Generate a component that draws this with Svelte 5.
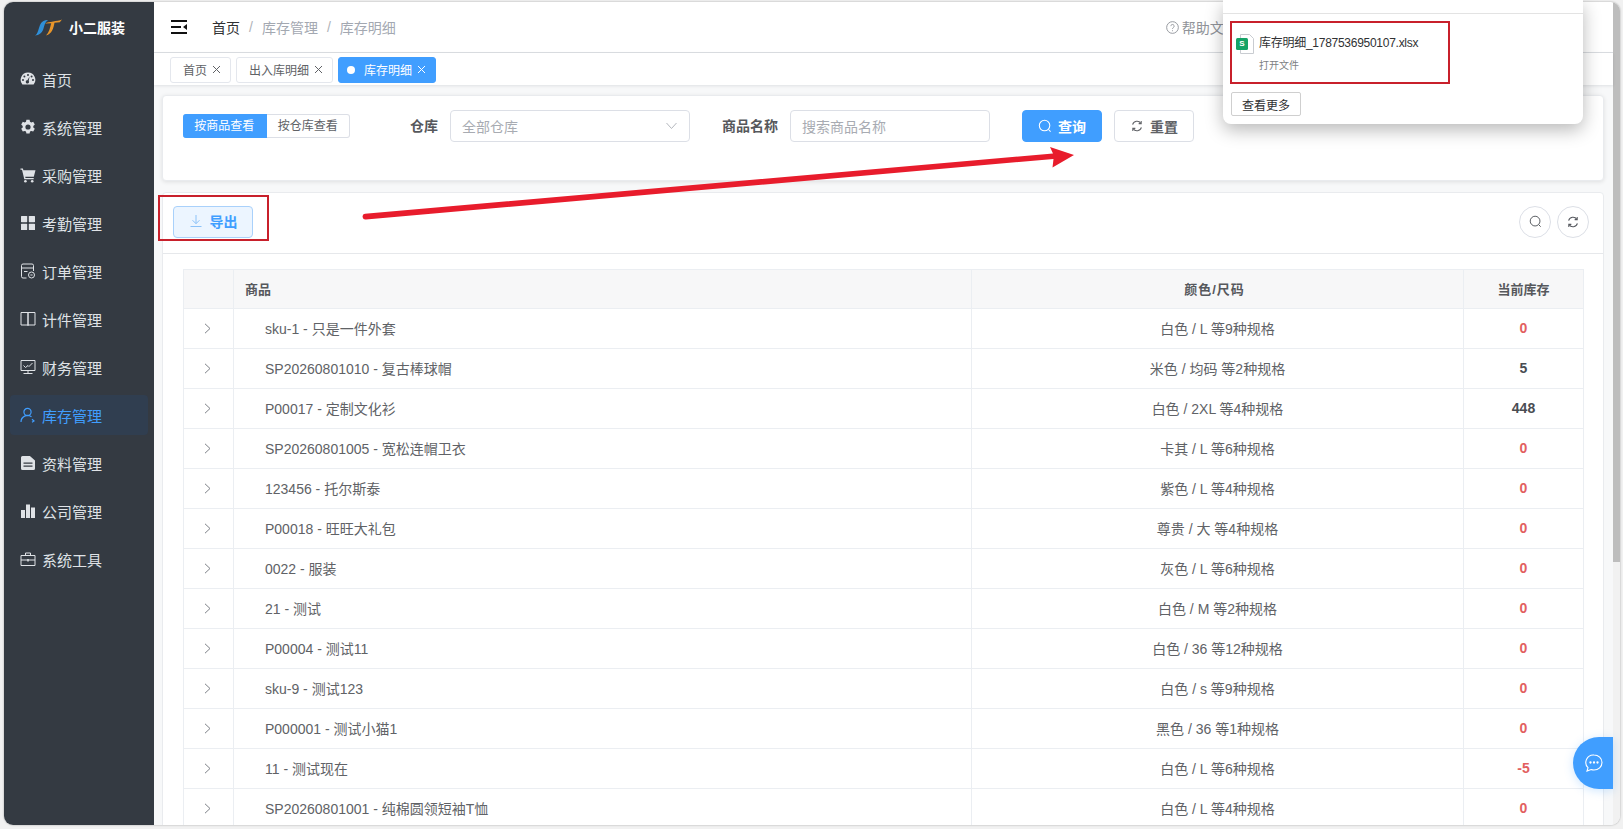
<script>
    const menus = [
        { name: "首页", icon: "gauge" },
        { name: "系统管理", icon: "gear" },
        { name: "采购管理", icon: "cart" },
        { name: "考勤管理", icon: "grid" },
        { name: "订单管理", icon: "order" },
        { name: "计件管理", icon: "book" },
        { name: "财务管理", icon: "screen" },
        { name: "库存管理", icon: "user", active: true },
        { name: "资料管理", icon: "doc" },
        { name: "公司管理", icon: "bars" },
        { name: "系统工具", icon: "case" },
    ];

    const tabs = [
        { name: "首页" },
        { name: "出入库明细" },
        { name: "库存明细", active: true },
    ];

    const rows = [
        ["sku-1 - 只是一件外套", "白色 / L 等9种规格", 0],
        ["SP20260801010 - 复古棒球帽", "米色 / 均码 等2种规格", 5],
        ["P00017 - 定制文化衫", "白色 / 2XL 等4种规格", 448],
        ["SP20260801005 - 宽松连帽卫衣", "卡其 / L 等6种规格", 0],
        ["123456 - 托尔斯泰", "紫色 / L 等4种规格", 0],
        ["P00018 - 旺旺大礼包", "尊贵 / 大 等4种规格", 0],
        ["0022 - 服装", "灰色 / L 等6种规格", 0],
        ["21 - 测试", "白色 / M 等2种规格", 0],
        ["P00004 - 测试11", "白色 / 36 等12种规格", 0],
        ["sku-9 - 测试123", "白色 / s 等9种规格", 0],
        ["P000001 - 测试小猫1", "黑色 / 36 等1种规格", 0],
        ["11 - 测试现在", "白色 / L 等6种规格", -5],
        ["SP20260801001 - 纯棉圆领短袖T恤", "白色 / L 等4种规格", 0],
    ];
</script>

{#snippet refreshIcon(size)}
    <svg width={size} height={size} viewBox="0 0 16 16" fill="none" stroke="currentColor" stroke-width="1.2">
        <path d="M3 6.5A5.2 5.2 0 0 1 12.4 5M13 9.5A5.2 5.2 0 0 1 3.6 11" />
        <path d="M12.8 2.4v2.9H9.9M3.2 13.6v-2.9h2.9" />
    </svg>
{/snippet}

{#snippet searchIcon(size)}
    <svg width={size} height={size} viewBox="0 0 16 16" fill="none" stroke="currentColor" stroke-width="1.2">
        <circle cx="7.5" cy="7.5" r="6" />
        <path d="M12 12l2.4 2.4" />
    </svg>
{/snippet}

{#snippet menuIcon(name)}
    <svg class="menu-icon" viewBox="0 0 16 16">
        {#if name === "gauge"}
            <path fill="currentColor" fill-rule="evenodd" d="M8 1.5a7.300 7.300 0 0 1 5.600 12H2.400A7.300 7.300 0 0 1 8 1.500zM8 3a1 1 0 1 0 0 2 1 1 0 0 0 0-2zM4.400 4.600a1 1 0 1 0 0 2 1 1 0 0 0 0-2zM11.600 4.600a1 1 0 1 0 0 2 1 1 0 0 0 0-2zM3 8a1 1 0 1 0 0 2 1 1 0 0 0 0-2zM13 8a1 1 0 1 0 0 2 1 1 0 0 0 0-2zM9.600 5.600L7.400 9.300a1.600 1.600 0 1 0 1.300.7z" />
        {:else if name === "gear"}
            <path fill="currentColor" fill-rule="evenodd" d="M6.400.8h3.200l.4 2 1.300.7 1.900-.7 1.600 2.800-1.500 1.300v1.600l1.500 1.300-1.600 2.800-1.900-.7-1.300.7-.4 2H6.400l-.4-2-1.300-.7-1.900.7-1.600-2.800 1.500-1.300V6.900L1.200 5.600l1.600-2.800 1.900.7L6 2.800zM8 5.400a2.600 2.600 0 1 0 0 5.200 2.600 2.600 0 0 0 0-5.200z" />
        {:else if name === "cart"}
            <path fill="currentColor" d="M.5 1.500h2.400l.5 1.800H15.500l-1.700 6.500H5.200l.3 1.200h8.200v1.300H4.300L2 2.800H.5z" />
            <circle fill="currentColor" cx="5.400" cy="14.200" r="1.300" />
            <circle fill="currentColor" cx="12.200" cy="14.200" r="1.300" />
        {:else if name === "grid"}
            <rect fill="currentColor" x="1" y="1" width="6.200" height="6.200" rx=".6" />
            <rect fill="currentColor" x="8.800" y="1" width="6.200" height="6.200" rx=".6" />
            <rect fill="currentColor" x="1" y="8.800" width="6.200" height="6.200" rx=".6" />
            <rect fill="currentColor" x="8.800" y="8.800" width="6.200" height="6.200" rx=".6" />
        {:else if name === "order"}
            <g fill="none" stroke="currentColor" stroke-width="1">
                <path d="M6.500 15H3a1.500 1.500 0 0 1-1.500-1.500V2.500A1.500 1.500 0 0 1 3 1h9a1.500 1.500 0 0 1 1.500 1.500V8" />
                <path d="M1.500 5h12M4 8.500h3.500" />
                <circle cx="11.500" cy="12" r="3" />
                <path d="M10.400 12h2.200" />
            </g>
        {:else if name === "book"}
            <g fill="none" stroke="currentColor" stroke-width="1">
                <path d="M8 1.500H1v12.500h7zM8 1.500h7v12.500H8z" />
                <path d="M8 14v1" />
            </g>
        {:else if name === "screen"}
            <g fill="none" stroke="currentColor" stroke-width="1">
                <path d="M1 1.500h14v10H1zM8 11.500v3M3.500 14.500h9" />
                <path d="M3.500 6.500l2 2 2.500-2 1 1L12.500 4" />
            </g>
        {:else if name === "user"}
            <g fill="none" stroke="currentColor" stroke-width="1.2">
                <circle cx="7.500" cy="5" r="3.600" />
                <path d="M1 15a6.500 6.500 0 0 1 10.500-5.200M12 12.200l2 1.800-2 1.200" />
            </g>
        {:else if name === "doc"}
            <path fill="currentColor" fill-rule="evenodd" d="M2.500 1h7.400L15 5.500v8a1.500 1.500 0 0 1-1.500 1.500h-11A1.500 1.500 0 0 1 1 13.500v-11A1.500 1.500 0 0 1 2.500 1zM3.500 7.500v1.300h9V7.500zM3.500 10.500v1.300h9v-1.300z" />
        {:else if name === "bars"}
            <rect fill="currentColor" x="1" y="7" width="4" height="8" />
            <rect fill="currentColor" x="6" y="1.500" width="4" height="13.500" />
            <rect fill="currentColor" x="11" y="4.500" width="4" height="10.500" />
        {:else if name === "case"}
            <g fill="none" stroke="currentColor" stroke-width="1">
                <path d="M1 4.500h14v10H1zM5.500 4.500V2h5v2.500M1 9h14" />
                <path d="M8 8v2.400" stroke-width="1.500" />
            </g>
        {/if}
    </svg>
{/snippet}

<div class="screen">
    <div class="window">
        <aside class="sidebar">
            <div class="logo">
                <svg width="27" height="17" viewBox="0 0 27 17">
                    <path fill="#2f8fd8" d="M0 16.500C3 15 3.500 9 5.500 5 7 2.200 10 .8 13 1 10 3 9.500 6 8.500 9.500 7.500 13.500 4 16.500 0 16.500z" />
                    <path fill="#e8952a" d="M10 4.500C14 2.500 22 2.500 27 .5l-2.200 2.700-5.300.6C18.500 9 17 15 11 16.500c3-3 4.200-8 5.200-12.300z" />
                </svg>
                <span>小二服装</span>
            </div>
            <nav class="menu">
                {#each menus as m}
                    <div class="menu-item" class:active={m.active}>
                        {@render menuIcon(m.icon)}
                        <span>{m.name}</span>
                    </div>
                {/each}
            </nav>
        </aside>

        <div class="main">
            <header class="navbar">
                <svg class="toggle" width="16" height="14" viewBox="0 0 16 14">
                    <path fill="#111" d="M0 0h16v2H0zM0 6h10v2H0zM0 12h16v2H0zM16 4v6l-4-3z" />
                </svg>
                <div class="crumbs">
                    <span class="crumb-home">首页</span>
                    <span class="sep">/</span>
                    <span>库存管理</span>
                    <span class="sep">/</span>
                    <span>库存明细</span>
                </div>
                <div class="help">
                    <svg width="13" height="13" viewBox="0 0 14 14" fill="none" stroke="#909399">
                        <circle cx="7" cy="7" r="6.300" />
                        <path d="M5.200 5.500a1.800 1.800 0 1 1 2.700 1.600c-.6.400-.9.700-.9 1.400M7 10v1" />
                    </svg>
                    <span>帮助文档</span>
                </div>
            </header>

            <div class="tabs">
                {#each tabs as t}
                    <div class="tab" class:active={t.active}>
                        {#if t.active}<i class="dot"></i>{/if}
                        <span>{t.name}</span>
                        <svg width="9" height="9" viewBox="0 0 9 9" stroke="currentColor" fill="none">
                            <path d="M1 1l7 7M8 1L1 8" />
                        </svg>
                    </div>
                {/each}
            </div>

            <div class="content">
                <section class="card filter">
                    <div class="radio">
                        <span class="radio-on">按商品查看</span>
                        <span>按仓库查看</span>
                    </div>
                    <label class="field-label store-label">仓库</label>
                    <div class="select">
                        <span>全部仓库</span>
                        <svg width="13" height="8" viewBox="0 0 13 8" fill="none" stroke="#b4b7bd">
                            <path d="M1.500 1l5 5.500 5-5.500" />
                        </svg>
                    </div>
                    <label class="field-label name-label">商品名称</label>
                    <div class="input">搜索商品名称</div>
                    <button class="btn btn-primary">
                        {@render searchIcon(14)}
                        <span>查询</span>
                    </button>
                    <button class="btn">
                        {@render refreshIcon(14)}
                        <span>重置</span>
                    </button>
                </section>

                <section class="card list">
                    <div class="toolbar">
                        <button class="export">
                            <svg width="14" height="14" viewBox="0 0 14 14" fill="none" stroke="currentColor">
                                <path d="M7 1v8.500M3.500 6.200L7 9.700l3.500-3.500M1.500 12.500h11" />
                            </svg>
                            <span>导出</span>
                        </button>
                        <div class="round-btns">
                            <span class="round">{@render searchIcon(13)}</span>
                            <span class="round">{@render refreshIcon(14)}</span>
                        </div>
                    </div>
                    <div class="table-wrap">
                        <table>
                            <colgroup>
                                <col style="width: 50px" />
                                <col style="width: 738px" />
                                <col style="width: 492px" />
                                <col style="width: 120px" />
                            </colgroup>
                            <thead>
                                <tr>
                                    <th></th>
                                    <th class="left">商品</th>
                                    <th class="spec-head">颜色/尺码</th>
                                    <th>当前库存</th>
                                </tr>
                            </thead>
                            <tbody>
                                {#each rows as r}
                                    <tr>
                                        <td>
                                            <svg class="chev" width="7" height="11" viewBox="0 0 7 11" fill="none" stroke="#7d8087">
                                                <path d="M1 .8l5 4.700-5 4.700" />
                                            </svg>
                                        </td>
                                        <td class="goods">{r[0]}</td>
                                        <td>{r[1]}</td>
                                        <td class="stock" class:low={r[2] <= 0}>{r[2]}</td>
                                    </tr>
                                {/each}
                            </tbody>
                        </table>
                    </div>
                </section>
            </div>

            <button class="chat" aria-label="客服">
                <svg width="20" height="20" viewBox="0 0 20 20" fill="none" stroke="#fff" stroke-width="1.100">
                    <path d="M10 2a8 7.500 0 0 1 0 15c-1 0-2-.2-2.900-.5L3 18l1-3.300A7.500 7.500 0 0 1 10 2z" />
                    <circle cx="6.500" cy="9.500" r=".6" fill="#fff" />
                    <circle cx="10" cy="9.500" r=".6" fill="#fff" />
                    <circle cx="13.500" cy="9.500" r=".6" fill="#fff" />
                </svg>
            </button>
        </div>

        <div class="scrollbar"><div class="thumb"></div></div>
    </div>

    <!-- 截图上的标注和下载弹窗 -->
    <div class="popover">
        <div class="pop-top"></div>
        <div class="pop-file">
            <svg width="18" height="20" viewBox="0 0 18 20">
                <path fill="#fff" stroke="#c9ccd1" d="M4.500.5h9l4 4v15h-13z" />
                <rect fill="#15a366" x="0" y="4" width="12" height="12" rx="1.500" />
            </svg>
            <span class="s-mark">S</span>
            <div class="file-text">
                <div class="file-name">库存明细_1787536950107.xlsx</div>
                <div class="file-open">打开文件</div>
            </div>
        </div>
        <button class="more">查看更多</button>
    </div>
    <div class="mark mark-file"></div>
    <div class="mark mark-export"></div>
    <svg class="arrow" width="1623" height="829" viewBox="0 0 1623 829">
        <path fill="#e81c2c" d="M365 213.800L1053 153.500 1050 147 1074 155 1052.500 167.500 1053.500 159 366 219.500a2.800 2.800 0 0 1-1-5.700z" />
    </svg>
</div>

<style>
    :global(body) {
        margin: 0;
    }

    .screen {
        position: relative;
        width: 1623px;
        height: 829px;
        padding: 2px 3px 4px 4px;
        box-sizing: border-box;
        background: #f1f1f1;
        overflow: hidden;
        font-family: "Liberation Sans", "Noto Sans CJK SC", sans-serif;
        color: #606266;
    }

    .window {
        display: flex;
        height: 100%;
        background: #fff;
        border-radius: 9px;
        overflow: hidden;
        box-shadow: 0 0 2px #9c9c9c;
    }

    .sidebar {
        width: 150px;
        flex: none;
        background: #343a42;
    }

    .logo {
        height: 50px;
        display: flex;
        align-items: center;
        gap: 7px;
        padding-left: 31px;
        color: #fff;
        font-size: 14px;
        font-weight: 700;
    }

    .menu {
        padding: 7px 6px 0;
        display: flex;
        flex-direction: column;
        gap: 8px;
    }

    .menu-item {
        height: 40px;
        display: flex;
        align-items: center;
        gap: 6px;
        padding-left: 10px;
        border-radius: 4px;
        font-size: 15px;
        color: #dfe2e6;
    }

    .menu-item.active {
        background: #303e50;
        color: #409eff;
    }

    .menu-icon {
        flex: none;
        width: 16px;
        height: 16px;
    }

    .main {
        position: relative;
        flex: 1;
        min-width: 0;
        display: flex;
        flex-direction: column;
    }

    .navbar {
        height: 50px;
        flex: none;
        display: flex;
        align-items: center;
        padding-left: 17px;
        border-bottom: 1px solid #dcdfe3;
        font-size: 14px;
    }

    .crumbs {
        margin-left: 25px;
        display: flex;
        align-items: center;
        gap: 9px;
        color: #a3a8b1;
        padding-bottom: 1px;
    }

    .crumb-home {
        color: #303133;
    }

    .sep {
        color: #b0b3b8;
    }

    .help {
        margin-left: 770px;
        display: flex;
        align-items: center;
        gap: 3px;
        color: #909399;
    }

    .tabs {
        height: 32px;
        flex: none;
        display: flex;
        align-items: center;
        gap: 5px;
        padding: 2px 0 0 16px;
        box-sizing: border-box;
        background: #fff;
        box-shadow: 0 1px 3px rgba(0, 21, 41, 0.1);
        position: relative;
        font-size: 12px;
    }

    .tab {
        height: 26px;
        display: flex;
        align-items: center;
        gap: 5px;
        padding: 0 9px 1px 12px;
        border: 1px solid #e4e7ed;
        border-radius: 3px;
        box-sizing: border-box;
        color: #606266;
    }

    .tab.active {
        background: #409eff;
        border-color: #409eff;
        color: #fff;
        padding-left: 8px;
    }

    .dot {
        width: 8px;
        height: 8px;
        border-radius: 50%;
        background: #fff;
        margin-right: 4px;
    }

    .content {
        flex: 1;
        min-height: 0;
        overflow: hidden;
        padding: 10px 9px 0 8px;
        background: #f7f8f9;
    }

    .card {
        background: #fff;
        border: 1px solid #e9ebee;
        border-radius: 4px;
    }

    .filter {
        height: 86px;
        box-sizing: border-box;
        box-shadow: 0 1px 4px rgba(0, 0, 0, 0.1);
        display: flex;
        align-items: flex-start;
        padding-top: 14px;
        padding-left: 20px;
        font-size: 14px;
    }

    .radio {
        display: flex;
        margin-top: 4px;
        height: 24px;
        font-size: 12px;
        line-height: 22px;
        box-sizing: border-box;
    }

    .radio span {
        width: 83.5px;
        border: 1px solid #dcdfe6;
        border-left: none;
        border-radius: 0 3px 3px 0;
        text-align: center;
        box-sizing: border-box;
    }

    .radio .radio-on {
        background: #409eff;
        border-color: #409eff;
        border-radius: 3px 0 0 3px;
        color: #fff;
    }

    .field-label {
        line-height: 32px;
        font-weight: 700;
        color: #56585c;
    }

    .store-label {
        margin-left: 60px;
    }

    .name-label {
        margin-left: 32px;
    }

    .select,
    .input {
        height: 32px;
        margin-left: 12px;
        box-sizing: border-box;
        border: 1px solid #dcdfe6;
        border-radius: 4px;
        color: #a8abb2;
        display: flex;
        align-items: center;
        padding: 0 11px 1px;
    }

    .select {
        width: 240px;
        justify-content: space-between;
    }

    .input {
        width: 200px;
    }

    .btn {
        height: 32px;
        width: 80px;
        margin-left: 12px;
        display: flex;
        align-items: center;
        justify-content: center;
        gap: 6px;
        border: 1px solid #dcdfe6;
        border-radius: 4px;
        background: #fff;
        color: #606266;
        font: inherit;
        font-weight: 700;
        padding: 0 0 1px;
    }

    .btn-primary {
        margin-left: 32px;
        background: #409eff;
        border-color: #409eff;
        color: #fff;
    }

    .list {
        margin-top: 11px;
        height: 760px;
    }

    .toolbar {
        height: 61px;
        box-sizing: border-box;
        display: flex;
        align-items: center;
        justify-content: space-between;
        padding: 0 14px 3px 10px;
        border-bottom: 1px solid #e6e8eb;
    }

    .export {
        width: 80px;
        height: 32px;
        display: flex;
        align-items: center;
        justify-content: center;
        gap: 7px;
        padding: 0 0 1px;
        background: #ecf5ff;
        border: 1px solid #a9d1fb;
        border-radius: 4px;
        color: #409eff;
        font: inherit;
        font-size: 14px;
        font-weight: 700;
    }

    .export svg {
        color: #8cc2f8;
    }

    .round-btns {
        display: flex;
        gap: 6px;
    }

    .round {
        width: 32px;
        height: 32px;
        border: 1px solid #dcdfe6;
        border-radius: 50%;
        box-sizing: border-box;
        display: flex;
        align-items: center;
        justify-content: center;
        color: #55585e;
    }

    .table-wrap {
        padding: 15px 19px 0 20px;
    }

    table {
        width: 1400px;
        border-collapse: collapse;
        table-layout: fixed;
        font-size: 14px;
    }

    th,
    td {
        border: 1px solid #ebeef2;
        text-align: center;
        padding: 0 0 2px;
    }

    th {
        height: 36px;
        background: #f7f7f8;
        font-size: 13px;
        font-weight: 700;
        color: #56585c;
    }

    th.left {
        text-align: left;
        padding-left: 11px;
    }

    th.spec-head {
        padding-right: 6px;
        letter-spacing: 1px;
    }

    td {
        height: 40px;
        box-sizing: border-box;
    }

    td.goods {
        text-align: left;
        padding-left: 31px;
    }

    .chev {
        display: block;
        margin: 0 auto;
        position: relative;
        left: -1px;
        top: 1px;
    }

    .stock {
        font-weight: 700;
        color: #494c52;
    }

    .stock.low {
        color: #e2605f;
    }

    .chat {
        position: absolute;
        right: 0;
        bottom: 36px;
        width: 40px;
        height: 52px;
        border: none;
        border-radius: 26px 0 0 26px;
        background: #409eff;
        box-shadow: 0 2px 10px rgba(64, 158, 255, 0.25);
        display: flex;
        align-items: center;
        justify-content: flex-start;
        padding: 0 0 0 11px;
        box-sizing: border-box;
    }

    .scrollbar {
        width: 7px;
        flex: none;
        background: #f1f1f1;
    }

    .thumb {
        height: 560px;
        background: #bdbdbd;
    }

    .popover {
        position: absolute;
        left: 1223px;
        top: 0;
        width: 360px;
        height: 124px;
        background: #fff;
        border-radius: 0 0 8px 8px;
        box-shadow: 0 6px 18px rgba(0, 0, 0, 0.28);
        font-size: 12px;
        color: #303133;
    }

    .pop-top {
        height: 13px;
        border-bottom: 1px solid #e3e3e3;
    }

    .pop-file {
        position: relative;
        display: flex;
        padding: 20px 0 0 13px;
        height: 58px;
        gap: 5px;
    }

    .s-mark {
        position: absolute;
        left: 13px;
        top: 24px;
        width: 12px;
        line-height: 12px;
        text-align: center;
        color: #fff;
        font-size: 8px;
        font-weight: 700;
    }

    .file-name {
        line-height: 16px;
        margin-top: 1px;
        letter-spacing: -0.27px;
    }

    .file-open {
        margin-top: 8px;
        font-size: 10px;
        line-height: 14px;
        color: #7d7f83;
    }

    .more {
        display: block;
        margin: 0 0 0 8px;
        width: 70px;
        height: 24px;
        padding: 0;
        background: #fff;
        border: 1px solid #cfcfcf;
        border-radius: 2px;
        font: inherit;
        color: #303133;
    }

    .mark {
        position: absolute;
        border: 2px solid #c8202b;
        box-sizing: border-box;
    }

    .mark-file {
        left: 1230px;
        top: 21px;
        width: 220px;
        height: 63px;
    }

    .mark-export {
        left: 158px;
        top: 195px;
        width: 111px;
        height: 46px;
    }

    .arrow {
        position: absolute;
        left: 0;
        top: 0;
        pointer-events: none;
    }
</style>
